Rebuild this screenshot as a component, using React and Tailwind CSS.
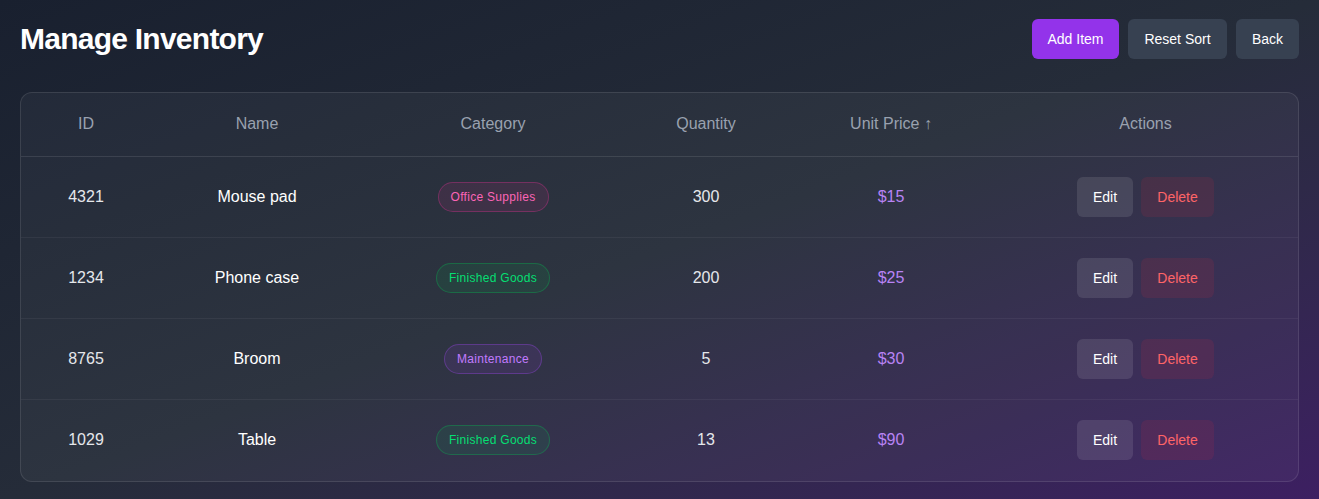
import React from 'react';

const items = [
  { id: 4321, name: 'Mouse pad', category: 'Office Supplies', quantity: 300, price: 15 },
  { id: 1234, name: 'Phone case', category: 'Finished Goods', quantity: 200, price: 25 },
  { id: 8765, name: 'Broom', category: 'Maintenance', quantity: 5, price: 30 },
  { id: 1029, name: 'Table', category: 'Finished Goods', quantity: 13, price: 90 },
];

const badgeStyles = {
  'Office Supplies': 'text-pink-400 bg-pink-500/10 border-pink-500/30',
  'Finished Goods': 'text-green-400 bg-green-500/10 border-green-500/30',
  Maintenance: 'text-purple-400 bg-purple-500/10 border-purple-500/30',
};

export default function App() {
  return (
    <div className="min-h-screen bg-gradient-to-br from-[#19202f] via-[#252c39] to-[#3d1f62] px-5 pt-[19px] pb-5 font-['Liberation_Sans',Arial,sans-serif] text-white">
      {/* Header */}
      <header className="flex items-center justify-between mb-[33px]">
        <h1 className="text-3xl font-bold tracking-tight">Manage Inventory</h1>
        <div className="flex items-center gap-[9px] text-sm">
          <button className="h-10 w-[87px] rounded-md bg-[#9333ea] text-white">Add Item</button>
          <button className="h-10 w-[99px] rounded-md bg-[#374151] text-white">Reset Sort</button>
          <button className="h-10 w-[63px] rounded-md bg-[#374151] text-white">Back</button>
        </div>
      </header>

      {/* Table */}
      <div className="rounded-xl border border-white/10 bg-white/[0.04] overflow-hidden">
        <table className="w-full table-fixed text-center">
          <colgroup>
            <col className="w-[130px]" />
            <col className="w-[212px]" />
            <col className="w-[260px]" />
            <col className="w-[166px]" />
            <col className="w-[204px]" />
            <col />
          </colgroup>
          <thead>
            <tr className="h-[63px] border-b border-white/10 text-gray-400">
              <th className="font-normal">ID</th>
              <th className="font-normal">Name</th>
              <th className="font-normal">Category</th>
              <th className="font-normal">Quantity</th>
              <th className="font-normal">Unit Price ↑</th>
              <th className="font-normal">Actions</th>
            </tr>
          </thead>
          <tbody>
            {items.map((item, i) => (
              <tr key={item.id} className={i < items.length - 1 ? 'h-[81px] border-b border-white/5' : 'h-[82px]'}>
                <td className="text-gray-200">{item.id}</td>
                <td className="text-white">{item.name}</td>
                <td>
                  <span className={`inline-flex items-center h-[30px] px-3 rounded-full border text-xs tracking-wide ${badgeStyles[item.category]}`}>
                    {item.category}
                  </span>
                </td>
                <td className="text-gray-200">{item.quantity}</td>
                <td className="text-[#b883f5]">${item.price}</td>
                <td>
                  <div className="flex items-center justify-center gap-2 text-sm">
                    <button className="h-10 w-14 rounded-md bg-white/10 text-white">Edit</button>
                    <button className="h-10 w-[73px] rounded-md bg-red-500/10 text-red-400">Delete</button>
                  </div>
                </td>
              </tr>
            ))}
          </tbody>
        </table>
      </div>
    </div>
  );
}
